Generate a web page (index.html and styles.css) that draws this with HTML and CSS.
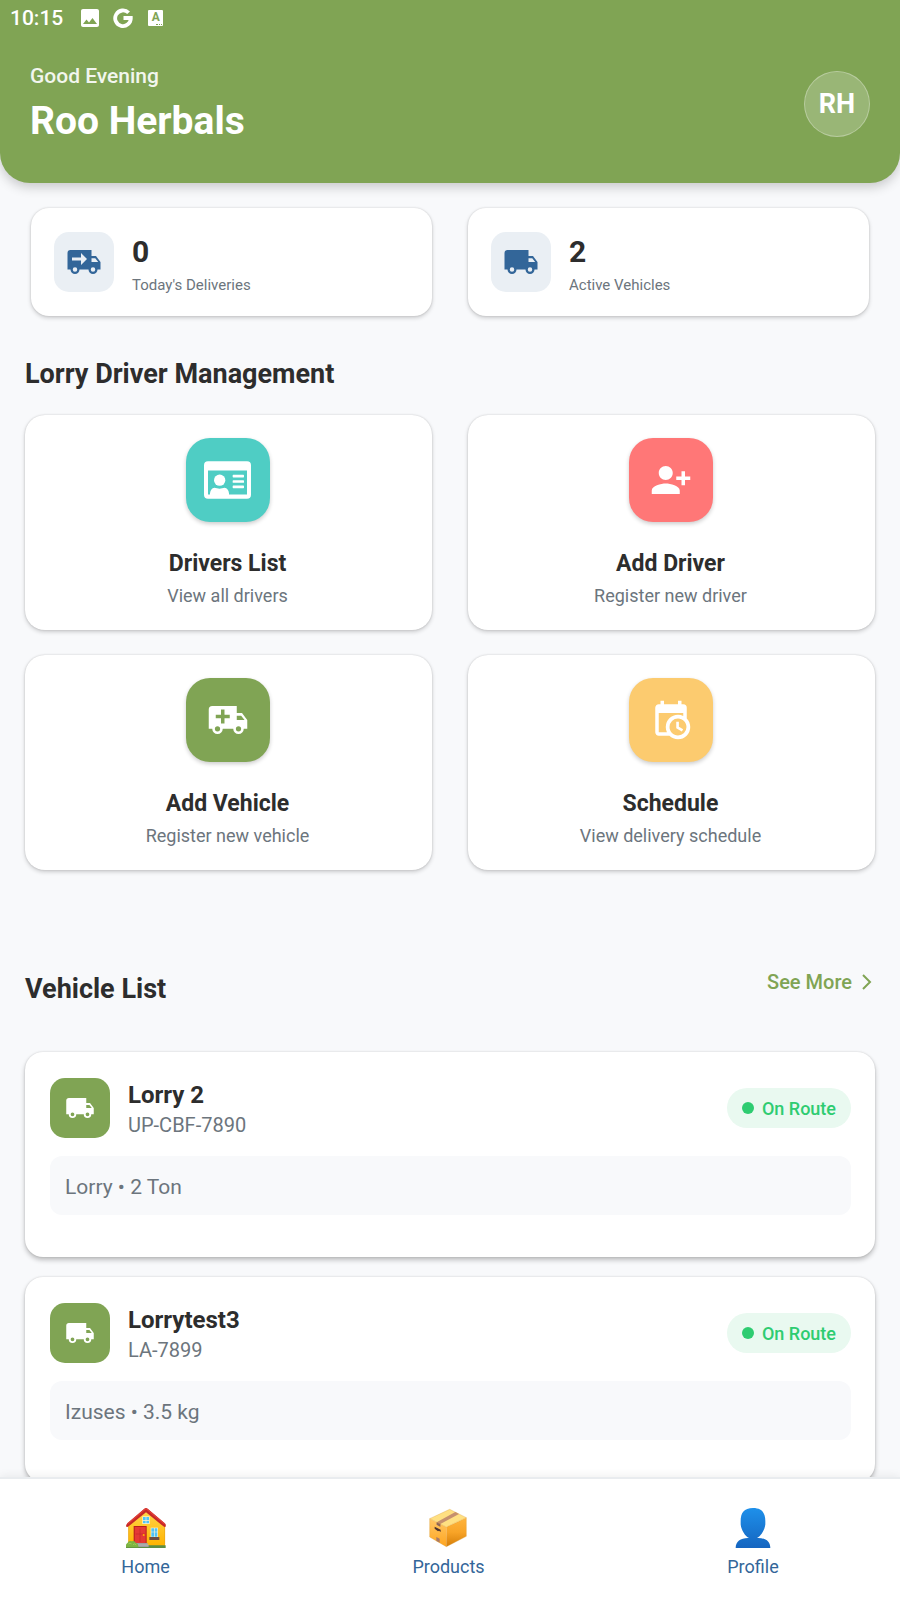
FILE: index.html
```html
<!DOCTYPE html>
<html lang="en">
<head>
<meta charset="utf-8">
<meta name="viewport" content="width=device-width, initial-scale=1">
<title>Roo Herbals</title>
<link rel="stylesheet" href="styles.css">
</head>
<body>
<svg width="0" height="0" class="defs" aria-hidden="true">
  <symbol id="truck" viewBox="0 0 24 24"><path d="M18,18.5A1.5,1.5 0 0,1 16.5,17A1.5,1.5 0 0,1 18,15.5A1.5,1.5 0 0,1 19.5,17A1.5,1.5 0 0,1 18,18.5M19.5,9.5L21.46,12H17V9.5M6,18.5A1.5,1.5 0 0,1 4.5,17A1.5,1.5 0 0,1 6,15.5A1.5,1.5 0 0,1 7.5,17A1.5,1.5 0 0,1 6,18.5M20,8H17V4H3C1.89,4 1,4.89 1,6V17H3A3,3 0 0,0 6,20A3,3 0 0,0 9,17H15A3,3 0 0,0 18,20A3,3 0 0,0 21,17H23V12L20,8Z"/></symbol>
</svg>
<div class="app">
  <header class="header">
    <div class="status">
      <span class="clock">10:15</span>
      <svg class="status-image" viewBox="3 3 18 18" aria-hidden="true"><path d="M21 19V5c0-1.100-.9-2-2-2H5c-1.100 0-2 .9-2 2v14c0 1.100.9 2 2 2h14c1.100 0 2-.9 2-2zM8.500 13.500l2.500 3.010L14.500 12l4.500 6H5l3.500-4.500z"/></svg>
      <svg class="status-g" viewBox="0 0 20 20" aria-hidden="true"><path d="M15.600 4.800A7.800 7.800 0 1 0 17.800 10H10.500" fill="none" stroke="currentColor" stroke-width="3.800"/></svg>
      <span class="status-a">A<i></i></span>
    </div>
    <div class="greeting">
      <div>
        <p class="hello">Good Evening</p>
        <h1>Roo Herbals</h1>
      </div>
      <button class="avatar" type="button">RH</button>
    </div>
  </header>

  <main class="content">
    <section class="stats">
      <article class="stat">
        <div class="stat-icon"><svg viewBox="0 0 24 24" aria-hidden="true"><path fill-rule="evenodd" d="M3 4A2 2 0 0 0 1 6V17H3A3 3 0 0 0 6 20A3 3 0 0 0 9 17H15A3 3 0 0 0 18 20A3 3 0 0 0 21 17H23V12L20 8H17V4ZM10 6L14 10L10 14V11H4V9H10ZM17 9.500H19.500L21.470 12H17ZM6 15.500A1.500 1.500 0 1 1 6 18.500A1.500 1.500 0 1 1 6 15.500ZM18 15.500A1.500 1.500 0 1 1 18 18.500A1.500 1.500 0 1 1 18 15.500Z"/></svg></div>
        <div class="stat-text"><p class="number">0</p><p class="stat-label">Today's Deliveries</p></div>
      </article>
      <article class="stat">
        <div class="stat-icon"><svg aria-hidden="true"><use href="#truck"/></svg></div>
        <div class="stat-text"><p class="number">2</p><p class="stat-label">Active Vehicles</p></div>
      </article>
    </section>

    <h2>Lorry Driver Management</h2>
    <section class="actions">
      <button class="action" type="button">
        <span class="tile teal"><svg class="id-card" viewBox="0 0 141 113" aria-hidden="true"><path fill-rule="evenodd" d="M12 0H129A12 12 0 0 1 141 12V101A12 12 0 0 1 129 113H12A12 12 0 0 1 0 101V12A12 12 0 0 1 12 0ZM12 28V100H18V96Q20 82 31 80Q47 85 62 80Q73 82 75 96V100H129V28Z"/><circle cx="47" cy="57" r="17"/><path d="M88 41h30q2 0 2 2v4q0 2-2 2H88q-2 0-2-2v-4q0-2 2-2zM88 57h30q2 0 2 2v4q0 2-2 2H88q-2 0-2-2v-4q0-2 2-2zM88 73h30q2 0 2 2v4q0 2-2 2H88q-2 0-2-2v-4q0-2 2-2z"/></svg></span>
        <strong>Drivers List</strong><small>View all drivers</small>
      </button>
      <button class="action" type="button">
        <span class="tile coral"><svg viewBox="0 0 24 24" aria-hidden="true"><path d="M13 8c0-2.210-1.790-4-4-4S5 5.790 5 8s1.790 4 4 4 4-1.790 4-4zm2 2v2h3v3h2v-3h3v-2h-3V7h-2v3h-3zM1 18v2h16v-2c0-2.660-5.330-4-8-4s-8 1.340-8 4z"/></svg></span>
        <strong>Add Driver</strong><small>Register new driver</small>
      </button>
      <button class="action" type="button">
        <span class="tile green"><svg viewBox="0 0 24 24" aria-hidden="true"><path fill-rule="evenodd" d="M3 4A2 2 0 0 0 1 6V17H3A3 3 0 0 0 6 20A3 3 0 0 0 9 17H15A3 3 0 0 0 18 20A3 3 0 0 0 21 17H23V12L20 8H17V4ZM8 6H10V9H13V11H10V14H8V11H5V9H8ZM17 9.500H19.500L21.470 12H17ZM6 15.500A1.500 1.500 0 1 1 6 18.500A1.500 1.500 0 1 1 6 15.500ZM18 15.500A1.500 1.500 0 1 1 18 18.500A1.500 1.500 0 1 1 18 15.500Z"/></svg></span>
        <strong>Add Vehicle</strong><small>Register new vehicle</small>
      </button>
      <button class="action" type="button">
        <span class="tile amber"><svg viewBox="0 0 24 24" aria-hidden="true"><path d="M15,13H16.500V15.820L18.940,17.230L18.190,18.530L15,16.690V13M19,8H5V19H9.670C9.240,18.090 9,17.070 9,16A7,7 0 0,1 16,9C17.070,9 18.090,9.240 19,9.670V8M5,21C3.890,21 3,20.100 3,19V5C3,3.890 3.890,3 5,3H6V1H8V3H16V1H18V3H19A2,2 0 0,1 21,5V11.100C22.240,12.360 23,14.090 23,16A7,7 0 0,1 16,23C14.090,23 12.360,22.240 11.100,21H5M16,11.150A4.850,4.850 0 0,0 11.150,16C11.150,18.680 13.320,20.850 16,20.850A4.850,4.850 0 0,0 20.850,16C20.850,13.320 18.680,11.150 16,11.150Z"/></svg></span>
        <strong>Schedule</strong><small>View delivery schedule</small>
      </button>
    </section>

    <div class="list-head">
      <h2>Vehicle List</h2>
      <a href="#vehicles" class="more">See More <svg viewBox="0 0 10 16" aria-hidden="true"><path d="M1 1L8 8L1 15" fill="none" stroke="currentColor" stroke-width="2"/></svg></a>
    </div>
    <section class="vehicles" id="vehicles">
      <article class="vehicle">
        <div class="vehicle-top">
          <div class="vehicle-icon"><svg aria-hidden="true"><use href="#truck"/></svg></div>
          <div class="vehicle-name"><h3>Lorry 2</h3><p>UP-CBF-7890</p></div>
          <span class="badge">On Route</span>
        </div>
        <p class="detail">Lorry • 2 Ton</p>
      </article>
      <article class="vehicle">
        <div class="vehicle-top">
          <div class="vehicle-icon"><svg aria-hidden="true"><use href="#truck"/></svg></div>
          <div class="vehicle-name"><h3>Lorrytest3</h3><p>LA-7899</p></div>
          <span class="badge">On Route</span>
        </div>
        <p class="detail">Izuses • 3.5 kg</p>
      </article>
    </section>
  </main>

  <nav class="tabs">
    <a href="#home">
      <svg viewBox="0 0 120 120" aria-hidden="true">
        <defs><linearGradient id="wall" x1="0" y1="0" x2="0" y2="1"><stop offset="0" stop-color="#ffd54a"/><stop offset="1" stop-color="#ffb300"/></linearGradient></defs>
        <path d="M7 50L60 7L117 52V114H7Z" fill="url(#wall)"/>
        <path d="M8 53V102M116 53V110" stroke="#e8a317" stroke-width="2"/>
        <path d="M60 0Q63 0 66 3L118 47Q121 51 118 57Q115 58 112 55L60 13L8 55Q4 58 1 56Q-1 51 3 47L54 3Q57 0 60 0Z" fill="#c62828"/>
        <path d="M4 48L57 4Q60 1 63 4L116 48" fill="none" stroke="#e04038" stroke-width="4"/>
        <path d="M49 25H71V48H49Z" fill="#fff5d0"/><path d="M51 27H59V36H51ZM61 27H69V36H61ZM51 38H59V46H51ZM61 38H69V46H61Z" fill="#4fc3f7"/>
        <path d="M74 59H96V88H74Z" fill="#fff5d0"/><path d="M76 61H84V71H76ZM86 61H94V71H86ZM76 73H84V86H76ZM86 73H94V86H86Z" fill="#4fc3f7"/>
        <path d="M70 87H100V96H70Z" fill="#6d4c41"/>
        <path d="M23 54H62V106H23Z" fill="#b71c1c"/><path d="M26 57H59V106H26Z" fill="#e53935"/><path d="M29 78H56M42 62V102" stroke="#c62828" stroke-width="2"/><circle cx="53" cy="81" r="3" fill="#ffb300"/>
        <path d="M30 105H65V111H70V118H30Z" fill="#9e9e9e"/><path d="M30 111H68" stroke="#c5c5c5" stroke-width="2"/>
        <path d="M68 112H119V120H0V112H30V117H68Z" fill="#5d8d42"/>
        <path d="M0 118Q-2 108 5 104Q8 97 17 100Q27 97 29 104Q39 107 37 118Z" fill="#7cb342"/><path d="M7 108Q12 103 17 108M21 110Q26 105 31 111" fill="none" stroke="#9ccc55" stroke-width="3"/>
      </svg>
      Home
    </a>
    <a href="#products">
      <svg viewBox="0 0 120 120" aria-hidden="true">
        <defs><linearGradient id="side" x1="0" y1="0" x2="0" y2="1"><stop offset="0" stop-color="#ffb43c"/><stop offset=".5" stop-color="#f8a427"/><stop offset="1" stop-color="#d47d08"/></linearGradient><linearGradient id="front" x1="0" y1="0" x2="0" y2="1"><stop offset="0" stop-color="#ffc765"/><stop offset="1" stop-color="#ffa51f"/></linearGradient></defs>
        <path d="M5 32L55 57V116L5 87Z" fill="url(#front)"/>
        <path d="M55 57L115 29V85L55 116Z" fill="url(#side)"/>
        <path d="M5 32L65 4L115 29L55 57Z" fill="#ffe082"/>
        <path d="M26 43L82 12L93 18L37 48V56L26 50Z" fill="#c6906e"/>
        <path d="M26 43L37 48V56L26 50Z" fill="#8d6658"/>
        <path d="M20 56L38 65V72L33 68L30 70L20 62Z" fill="#4e342e"/>
        <path d="M25 87L35 92V104L30 101L25 99Z" fill="#a87968"/>
        <path d="M5 32L55 57L115 29M5 32V87L55 116L115 85V29L65 4Z" fill="none" stroke="#d99b38" stroke-width="1"/>
      </svg>
      Products
    </a>
    <a href="#profile">
      <svg viewBox="0 0 120 120" aria-hidden="true">
        <defs><linearGradient id="bust" x1="0" y1="0" x2="0" y2="1"><stop offset="0" stop-color="#1e90ea"/><stop offset="1" stop-color="#1565c0"/></linearGradient></defs>
        <path d="M60 0C87 0 97 15 97 39V47C97 64 83 86 72 90C96 89 112 99 112 120H8C8 99 24 89 48 90C37 86 23 64 23 47V39C23 15 33 0 60 0Z" fill="url(#bust)"/>
      </svg>
      Profile
    </a>
  </nav>
</div>
</body>
</html>
```
FILE: styles.css
```css
* { box-sizing: border-box; margin: 0; padding: 0; }
body {
  font-family: Roboto, "Liberation Sans", sans-serif;
  background: #f8f9fb;
  color: #2d2d2d;
}
.defs { position: absolute; }
svg { fill: currentColor; display: block; }
button { font: inherit; border: 0; cursor: pointer; }
a { text-decoration: none; }

.app { height: 100vh; display: flex; flex-direction: column; }

.header {
  flex: none;
  background: #80a454;
  color: #fff;
  border-radius: 0 0 30px 30px;
  box-shadow: 0 4px 12px rgba(0, 0, 0, .2);
  z-index: 1;
}
.status { height: 36px; display: flex; align-items: center; padding: 0 10px; }
.clock { font-size: 21px; font-weight: 500; }
.status-image { width: 18px; height: 18px; margin-left: 18px; }
.status-g { width: 20px; height: 20px; margin-left: 14px; }
.status-a {
  width: 15px;
  height: 16px;
  margin-left: 15px;
  border-radius: 1px;
  background: #fff;
  color: #80a454;
  font-size: 12px;
  font-weight: 700;
  line-height: 14px;
  text-align: center;
  position: relative;
}
.status-a i {
  position: absolute;
  right: 1px;
  bottom: 1px;
  width: 6px;
  border-bottom: 1px dotted #80a454;
}
.greeting {
  display: flex;
  align-items: center;
  justify-content: space-between;
  padding: 28px 30px 39px;
}
.hello { font-size: 21px; line-height: 25px; font-weight: 500; opacity: .9; margin-bottom: 9px; }
h1 { font-size: 39px; line-height: 46px; font-weight: 700; }
.avatar {
  width: 66px;
  height: 66px;
  border-radius: 50%;
  border: 1px solid rgba(255, 255, 255, .3);
  background: rgba(255, 255, 255, .2);
  color: #fff;
  font-size: 27px;
  font-weight: 700;
}

.content {
  flex: 1;
  min-height: 0;
  overflow-y: auto;
  scrollbar-width: none;
  padding: 25px 25px 20px;
}
.stats { display: grid; grid-template-columns: 1fr 1fr; gap: 36px; padding: 0 6px; margin-bottom: 42px; }
.stat, .action, .vehicle {
  background: #fff;
  box-shadow: 0 0 2px rgba(0, 0, 0, .16), 0 2px 4px rgba(0, 0, 0, .18);
}
.stat { display: flex; align-items: center; gap: 18px; padding: 23px; border-radius: 18px; }
.stat-icon {
  width: 60px;
  height: 60px;
  border-radius: 15px;
  background: #eaeff4;
  color: #336699;
  display: grid;
  place-items: center;
}
.stat-icon svg { width: 36px; height: 36px; }
.stat-text { display: grid; gap: 7px; padding-top: 3px; }
.number { font-size: 30px; line-height: 36px; font-weight: 700; }
.stat-label { font-size: 15px; line-height: 16px; color: #6c757d; }

h2 { font-size: 27px; line-height: 32px; font-weight: 700; }
.actions { display: grid; grid-template-columns: 1fr 1fr; gap: 25px 36px; margin-top: 25px; }
.action {
  display: flex;
  flex-direction: column;
  align-items: center;
  padding: 23px 25px 23px 23px;
  border-radius: 20px;
  color: inherit;
}
.tile {
  width: 84px;
  height: 84px;
  margin-bottom: 28px;
  border-radius: 24px;
  display: grid;
  place-items: center;
  color: #fff;
  box-shadow: 0 2px 4px rgba(0, 0, 0, .2);
}
.tile svg { width: 42px; height: 42px; }
.tile .id-card { width: 47px; height: 38px; }
.teal { background: #4fcdc4; }
.coral { background: #ff7777; }
.green { background: #80a454; }
.amber { background: #fccb6f; }
.action strong { font-size: 23px; line-height: 28px; font-weight: 700; margin-bottom: 7px; }
.action small { font-size: 18px; line-height: 22px; color: #6c757d; }

.list-head { display: flex; justify-content: space-between; align-items: flex-start; margin: 99px 0 47px; }
.list-head h2 { padding-top: 4px; }
.more {
  display: flex;
  align-items: center;
  gap: 10px;
  padding-right: 3px;
  color: #80a454;
  font-size: 20px;
  line-height: 26px;
  font-weight: 500;
}
.more svg { width: 10px; height: 16px; }

.vehicles { display: grid; gap: 20px; }
.vehicle { padding: 26px 24px 42px 25px; border-radius: 18px; box-shadow: 0 0 2px rgba(0, 0, 0, .16), 0 3px 5px rgba(0, 0, 0, .24); }
.vehicle-top { display: flex; align-items: center; gap: 18px; margin-bottom: 18px; }
.vehicle-icon {
  width: 60px;
  height: 60px;
  border-radius: 15px;
  background: #80a454;
  color: #fff;
  display: grid;
  place-items: center;
}
.vehicle-icon svg { width: 30px; height: 30px; }
.vehicle-name { flex: 1; padding-top: 2px; }
h3 { font-size: 24px; line-height: 28px; font-weight: 700; margin-bottom: 4px; }
.vehicle-name p { font-size: 20px; line-height: 24px; color: #6c757d; }
.badge {
  display: flex;
  align-items: center;
  gap: 8px;
  height: 40px;
  padding: 0 15px;
  border-radius: 20px;
  background: #e9f9f0;
  color: #2ecc71;
  font-size: 18px;
  font-weight: 500;
}
.badge::before { content: ""; width: 12px; height: 12px; border-radius: 50%; background: #2ecc71; }
.detail {
  padding: 19px 15px 15px;
  border-radius: 12px;
  background: #f8f9fb;
  color: #6c757d;
  font-size: 21px;
  line-height: 25px;
}

.tabs {
  flex: none;
  display: flex;
  justify-content: space-around;
  padding: 29px 0 21px;
  border-top: 2px solid #e9ecef;
  background: #fff;
  box-shadow: 0 -2px 8px rgba(0, 0, 0, .06);
  z-index: 1;
}
.tabs a {
  display: flex;
  flex-direction: column;
  align-items: center;
  gap: 7px;
  color: #336699;
  font-size: 18px;
  line-height: 24px;
}
.tabs svg { width: 40px; height: 40px; }
```
